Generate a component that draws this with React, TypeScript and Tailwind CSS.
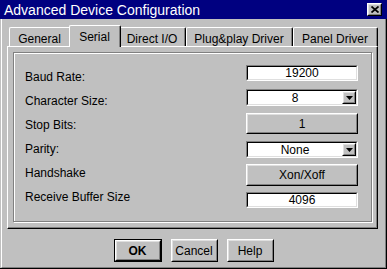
import React from "react";

const raisedOuter = "border border-t-white border-l-white border-r-black border-b-black";
const raisedInner = "border border-t-[#dfdfdf] border-l-[#dfdfdf] border-r-[#808080] border-b-[#808080]";
const sunkenOuter = "border border-t-[#808080] border-l-[#808080] border-r-white border-b-white";
const sunkenInner = "border border-t-black border-l-black border-r-[#dfdfdf] border-b-[#dfdfdf]";

function Tab({ label, className, active }: { label: string; className: string; active?: boolean }) {
  if (active) {
    return (
      <div className={`relative z-10 -mx-[2px] h-[22px] rounded-tl-[2px] rounded-tr-[2px] border-t border-l border-r border-t-white border-l-white border-r-black bg-[#c0c0c0] ${className}`}>
        <div className="h-full border-r border-r-[#808080] pt-[4px] text-center leading-[14px]">{label}</div>
      </div>
    );
  }
  return (
    <div className={`mb-px h-[19px] rounded-tl-[2px] rounded-tr-[2px] border-t border-l border-r border-t-white border-l-white border-r-black bg-[#c0c0c0] ${className}`}>
      <div className="h-full border-r border-r-[#808080] pt-[4px] text-center leading-[14px]">{label}</div>
    </div>
  );
}

function Field({ value, className = "" }: { value: string; className?: string }) {
  return (
    <div className={`h-[16px] bg-white ${sunkenOuter} ${className}`}>
      <div className={`flex h-full items-center justify-center leading-none ${sunkenInner}`}>{value}</div>
    </div>
  );
}

function Combo({ value, className = "" }: { value: string; className?: string }) {
  return (
    <div className={`h-[17px] bg-white ${sunkenOuter} ${className}`}>
      <div className={`flex h-full items-stretch ${sunkenInner}`}>
        <span className="flex flex-1 items-center justify-center leading-none">{value}</span>
        <div className={`w-[14px] bg-[#c0c0c0] ${raisedOuter}`}>
          <div className={`flex h-full items-center justify-center ${raisedInner}`}>
            <svg width="7" height="4" viewBox="0 0 7 4">
              <polygon points="0,0 7,0 3.5,4" fill="#000" />
            </svg>
          </div>
        </div>
      </div>
    </div>
  );
}

function Button({ label, className = "" }: { label: string; className?: string }) {
  return (
    <div className={`bg-[#c0c0c0] ${raisedOuter} ${className}`}>
      <div className={`flex h-full items-center justify-center leading-none ${raisedInner}`}>{label}</div>
    </div>
  );
}

export default function App() {
  return (
    <div className="flex h-[269px] w-[387px] flex-col overflow-hidden bg-[#c0c0c0] font-['Liberation_Sans',Arial,sans-serif] text-[12px] text-black">
      <div className="flex h-[19px] items-center bg-[#000080] pl-[4px] pr-[5px]">
        <span className="flex-1 text-[14px] leading-none text-white">Advanced Device Configuration</span>
        <div className={`h-[13px] w-[15px] bg-[#c0c0c0] ${raisedOuter}`}>
          <div className={`flex h-full items-center justify-center ${raisedInner}`}>
            <svg width="8" height="7" viewBox="0 0 8 7">
              <path d="M0.5 0.5 L7.5 6.5 M7.5 0.5 L0.5 6.5" stroke="#000" strokeWidth="1.7" />
            </svg>
          </div>
        </div>
      </div>

      <div className="flex flex-1 border-r border-b border-black">
        <div className="ml-px flex flex-1 flex-col border-l border-r border-b border-l-white border-r-[#808080] border-b-[#808080]">
          <div className="relative z-10 mt-[6px] flex h-[22px] items-end pl-[7px]">
            <Tab label="General" className="w-[62px]" />
            <Tab label="Serial" className="w-[52px]" active />
            <Tab label="Direct I/O" className="w-[67px]" />
            <Tab label="Plug&play Driver" className="w-[107px]" />
            <Tab label="Panel Driver" className="w-[85px]" />
          </div>

          <div className="-mt-px ml-[5px] h-[183px] w-[371px] border-t border-l border-r border-b border-t-white border-l-white border-r-black border-b-black">
            <div className="h-full border-r border-b border-r-[#808080] border-b-[#808080] pt-[5px] pl-[5px]">
              <div className="flex h-[170px] w-[359px] justify-between border border-[#808080] pt-[12px] pl-[11px] pr-[13px] shadow-[1px_1px_0_#fff,inset_1px_1px_0_#fff]">
                <div className="flex flex-col leading-[24px]">
                  <span>Baud Rate:</span>
                  <span>Character Size:</span>
                  <span>Stop Bits:</span>
                  <span>Parity:</span>
                  <span>Handshake</span>
                  <span>Receive Buffer Size</span>
                </div>
                <div className="flex w-[112px] flex-col">
                  <Field value="19200" />
                  <Combo value="8" className="mt-[8px]" />
                  <Button label="1" className="mt-[7px] h-[21px]" />
                  <Combo value="None" className="mt-[7px]" />
                  <Button label="Xon/Xoff" className="mt-[6px] h-[22px]" />
                  <Field value="4096" className="mt-[6px]" />
                </div>
              </div>
            </div>
          </div>

          <div className="mt-[10px] flex justify-center gap-[9px]">
            <div className="h-[23px] w-[48px] border border-black">
              <Button label="OK" className="h-full font-bold" />
            </div>
            <Button label="Cancel" className="h-[23px] w-[47px]" />
            <Button label="Help" className="h-[23px] w-[47px]" />
          </div>
        </div>
      </div>
    </div>
  );
}
